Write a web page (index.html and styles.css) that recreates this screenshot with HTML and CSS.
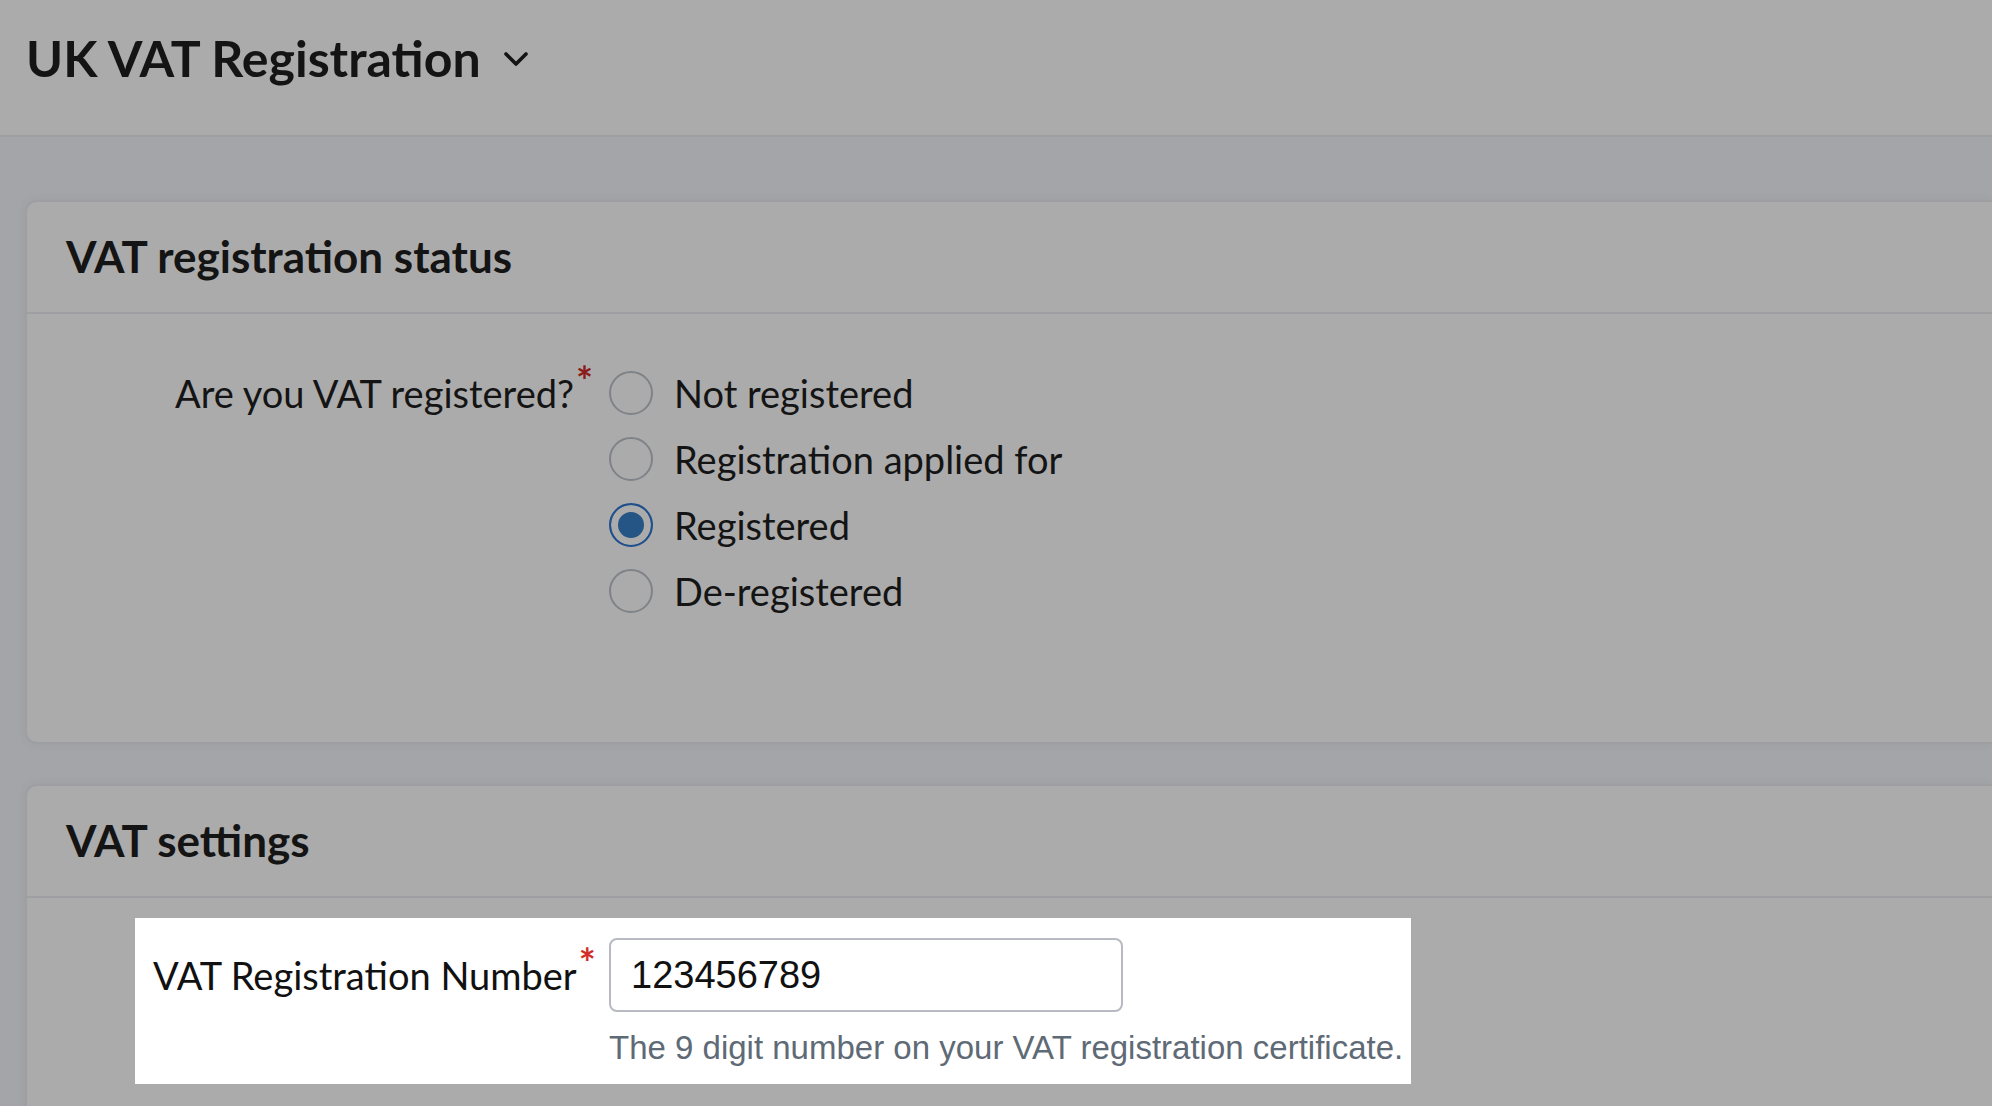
FILE: index.html
```html
<!DOCTYPE html>
<html>
<head>
    <title>UK VAT Registration</title>
    <link rel="stylesheet" href="styles.css">
</head>
<body>
    <header class="page-header">
        <h1 class="page-title">UK VAT Registration
            <svg class="chevron" viewBox="0 0 26 16" width="26" height="16"><path d="M3 3l10 10 10-10" fill="none" stroke="#141414" stroke-width="3.6" stroke-linecap="round" stroke-linejoin="round"/></svg>
        </h1>
    </header>

    <main class="page-body">
        <section class="card">
            <div class="card-header">
                <h2 class="card-title">VAT registration status</h2>
            </div>
            <div class="card-body status-body">
                <div class="form-row status-row">
                    <label class="field-label">Are you VAT registered?<span class="req">*</span></label>
                    <div class="radio-list">
                        <label class="radio-option"><input type="radio" name="vat"> Not registered</label>
                        <label class="radio-option"><input type="radio" name="vat"> Registration applied for</label>
                        <label class="radio-option"><input type="radio" name="vat" checked> Registered</label>
                        <label class="radio-option"><input type="radio" name="vat"> De-registered</label>
                    </div>
                </div>
            </div>
        </section>

        <section class="card">
            <div class="card-header">
                <h2 class="card-title">VAT settings</h2>
            </div>
            <div class="card-body settings-body">
                <div class="form-row spotlight">
                    <label class="field-label input-label">VAT Registration Number<span class="req">*</span></label>
                    <div class="field-control">
                        <input class="text-input" type="text" value="123456789">
                        <p class="help-text">The 9 digit number on your VAT registration certificate.</p>
                    </div>
                </div>
            </div>
        </section>
    </main>
</body>
</html>
```

FILE: styles.css
```css
body {
    margin: 0;
    background: #a3a5a9;
    font-family: Lato, "Open Sans", sans-serif;
    color: #141414;
    overflow: hidden;
}

.page-header {
    height: 135px;
    background: #ababab;
    border-bottom: 2px solid #9e9e9e;
    padding-left: 26px;
}

.page-title {
    margin: 0;
    padding-top: 28px;
    font-size: 50px;
    line-height: 60px;
    font-weight: 700;
    display: flex;
    align-items: center;
    gap: 22px;
}

.chevron {
    margin-top: 2px;
}

.page-body {
    padding: 63px 0 0 25px;
    display: flex;
    flex-direction: column;
    gap: 40px;
}

.card {
    background: #ababab;
    border: 2px solid #9d9fa3;
    border-right: none;
    border-radius: 12px 0 0 12px;
    box-shadow: 0 0 10px rgba(0, 0, 0, 0.05);
}

.card-header {
    height: 108px;
    padding: 0 0 2px 39px;
    border-bottom: 2px solid #9d9fa3;
    display: flex;
    align-items: center;
}

.card-title {
    margin: 0;
    font-size: 44px;
    font-weight: 700;
}

.status-body {
    padding: 46px 0 118px;
}

.settings-body {
    padding: 20px 0 80px 108px;
}

.form-row {
    display: grid;
    grid-template-columns: 566px auto;
    column-gap: 16px;
    align-items: start;
}

.field-label {
    font-size: 38px;
    line-height: 66px;
    text-align: right;
    white-space: nowrap;
}

.req {
    color: #8c1b1b;
    font-weight: 700;
    font-size: 40px;
    line-height: 0;
    vertical-align: 12px;
    margin-left: 2px;
}

.radio-list {
    display: flex;
    flex-direction: column;
}

.radio-option {
    height: 66px;
    display: flex;
    align-items: center;
    gap: 21px;
    font-size: 38px;
}

.radio-option input {
    appearance: none;
    margin: 0;
    width: 44px;
    height: 44px;
    border: 2px solid #7f8388;
    border-radius: 50%;
    background: transparent;
}

.radio-option input:checked {
    border-color: #1f4f8c;
    background: #245585;
    box-shadow: inset 0 0 0 7px #ababab;
}

.spotlight {
    width: 1247px;
    background: #ffffff;
    padding: 20px 11px 16px 18px;
    grid-template-columns: 440px auto;
}

.spotlight .req {
    color: #d22f2b;
}

.input-label {
    line-height: 74px;
    color: #111111;
}

.text-input {
    box-sizing: border-box;
    width: 514px;
    height: 74px;
    margin: 0;
    border: 2px solid #b7bbc1;
    border-radius: 8px;
    padding: 0 20px;
    font-family: "Liberation Sans", Arial, sans-serif;
    font-size: 38px;
    color: #111111;
    background: #ffffff;
    outline: none;
}

.help-text {
    margin: 16px 0 0;
    font-family: "Liberation Sans", Arial, sans-serif;
    font-size: 33px;
    line-height: 40px;
    color: #5e6a75;
    white-space: nowrap;
}
```
